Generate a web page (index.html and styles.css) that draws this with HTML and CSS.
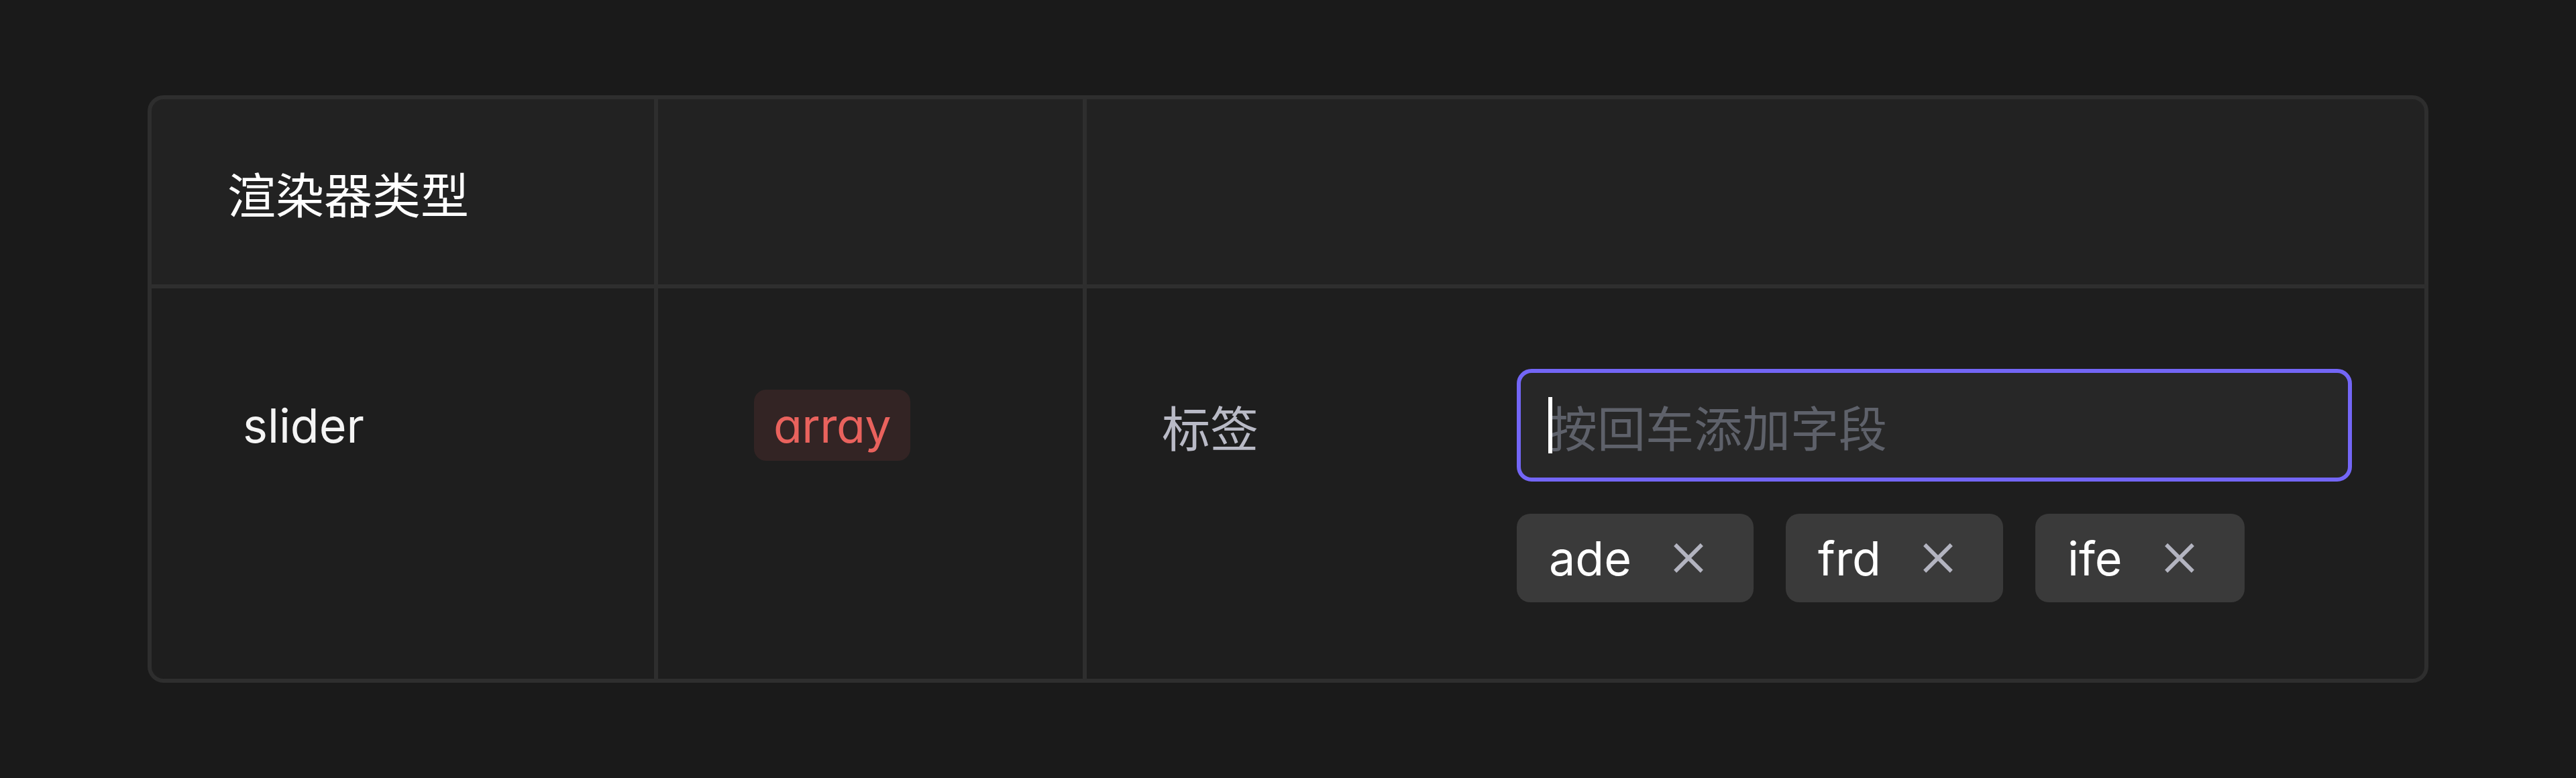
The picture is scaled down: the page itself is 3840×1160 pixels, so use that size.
FILE: index.html
```html
<!DOCTYPE html>
<html lang="zh-CN">
<head>
<meta charset="utf-8">
<title>渲染器类型</title>
<link rel="stylesheet" href="styles.css">
</head>
<body>
<div class="page">
  <div class="table">
    <div class="cell head first"><span class="head-text">渲染器类型</span></div>
    <div class="cell head"></div>
    <div class="cell head"></div>

    <div class="cell body-cell first">
      <div class="line"><span class="name">slider</span></div>
    </div>
    <div class="cell body-cell second">
      <div class="line"><span class="badge">array</span></div>
    </div>
    <div class="cell body-cell third">
      <div class="form-item">
        <div class="label line">标签</div>
        <div class="field">
          <div class="input">
            <span class="caret"></span>
            <span class="placeholder">按回车添加字段</span>
          </div>
          <div class="chips">
            <div class="chip"><span class="chip-text">ade</span><svg class="close" viewBox="0 0 44 44"><path d="M3 3 L41 41 M41 3 L3 41"/></svg></div>
            <div class="chip"><span class="chip-text">frd</span><svg class="close" viewBox="0 0 44 44"><path d="M3 3 L41 41 M41 3 L3 41"/></svg></div>
            <div class="chip"><span class="chip-text">ife</span><svg class="close" viewBox="0 0 44 44"><path d="M3 3 L41 41 M41 3 L3 41"/></svg></div>
          </div>
        </div>
      </div>
    </div>
  </div>
</div>
</body>
</html>
```
FILE: styles.css
```css
* { box-sizing: border-box; }

html, body {
  margin: 0;
  padding: 0;
  background: #1a1a1a;
}

body {
  font-family: Inter, "Noto Sans CJK SC", sans-serif;
  color: #ffffff;
}

.page {
  padding: 142px 220px;
}

.table {
  width: 3400px;
  height: 876px;
  border: 6px solid #2e2e2e;
  border-radius: 24px;
  overflow: hidden;
  background: #2e2e2e;
  display: grid;
  grid-template-columns: 749px 633px 1fr;
  grid-template-rows: 276px 1fr;
  gap: 6px;
}

.cell.head {
  background: #222222;
  display: flex;
  align-items: center;
}

.head.first {
  padding-left: 113px;
}

.head-text {
  font-family: "Noto Sans CJK SC", sans-serif;
  font-size: 72px;
  color: #ffffff;
}

.body-cell {
  background: #1e1e1e;
  padding-top: 120px;
}

.body-cell.first { padding-left: 136px; }
.body-cell.second { padding-left: 143px; }
.body-cell.third { padding-left: 112px; padding-right: 108px; }

.line {
  height: 168px;
  display: flex;
  align-items: center;
}

.name {
  font-size: 70px;
  color: #f4f4f4;
}

.badge {
  height: 106px;
  padding: 0 29px;
  display: flex;
  align-items: center;
  background: #332424;
  border-radius: 18px;
  color: #e9625d;
  font-size: 70px;
  letter-spacing: -0.5px;
  font-feature-settings: "cv11" 1;
}

.form-item {
  display: flex;
}

.label {
  width: 529px;
  flex: none;
  font-family: "Noto Sans CJK SC", sans-serif;
  font-size: 72px;
  color: #b9bac6;
}

.field {
  flex: 1;
  display: flex;
  flex-direction: column;
  gap: 48px;
}

.input {
  height: 168px;
  border: 6px solid #7366f6;
  border-radius: 22px;
  background: #272727;
  padding-left: 41px;
  display: flex;
  align-items: center;
}

.caret {
  width: 6px;
  height: 84px;
  background: #ffffff;
  margin-right: -5px;
  position: relative;
  z-index: 1;
}

.placeholder {
  font-family: "Noto Sans CJK SC", sans-serif;
  font-size: 72px;
  color: #5e616a;
}

.chips {
  display: flex;
  gap: 48px;
}

.chip {
  height: 132px;
  background: #3a3a3a;
  border-radius: 20px;
  display: flex;
  align-items: center;
  padding: 0 74px 0 48px;
  gap: 62px;
}

.chip-text {
  font-size: 70px;
  color: #ffffff;
}

.close {
  width: 46px;
  height: 46px;
  fill: none;
  stroke: #b3b4c0;
  stroke-width: 5.5;
}
```
